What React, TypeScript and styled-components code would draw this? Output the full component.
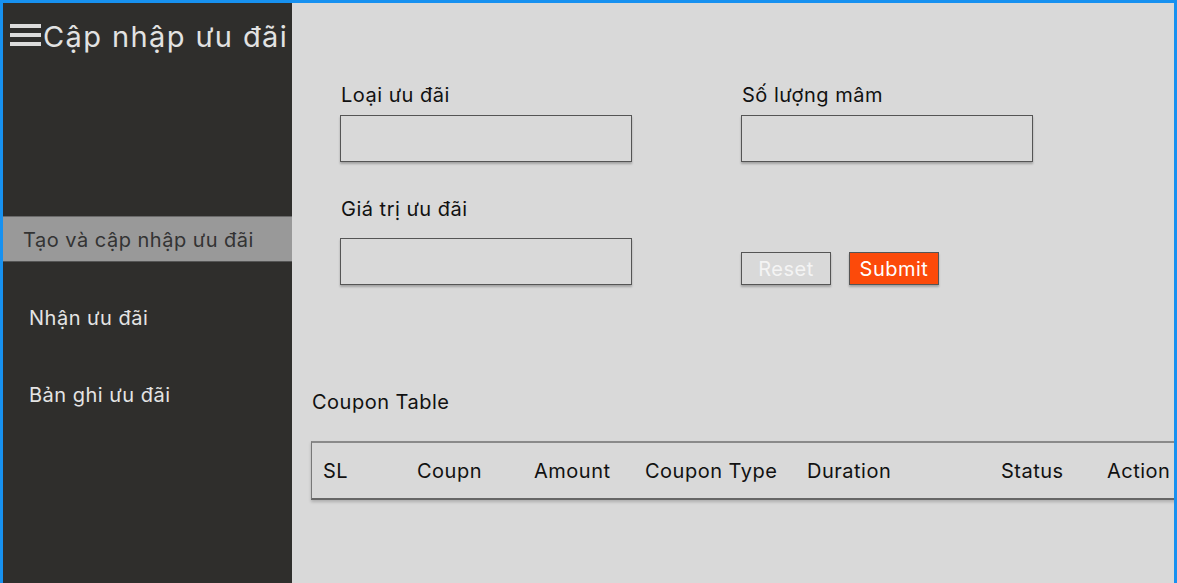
import React from 'react'
import styled, { createGlobalStyle } from 'styled-components'

const GlobalStyle = createGlobalStyle`
  html, body {
    margin: 0;
    padding: 0;
    height: 100%;
    overflow: hidden;
  }
  body {
    font-family: Inter, "Noto Sans", "Liberation Sans", sans-serif;
    letter-spacing: 0.5px;
  }
  #root {
    height: 100%;
  }
`

const navItems = [
  { label: 'Tạo và cập nhập ưu đãi', active: true },
  { label: 'Nhận ưu đãi', active: false },
  { label: 'Bản ghi ưu đãi', active: false },
]

const columns = ['SL', 'Coupn', 'Amount', 'Coupon Type', 'Duration', 'Status', 'Action']

const MenuIcon = () => (
  <svg width="31" height="24" viewBox="0 0 31 24" fill="#dcdcdc">
    <rect x="0" y="0" width="31" height="4" />
    <rect x="0" y="9" width="31" height="4" />
    <rect x="0" y="18" width="31" height="4" />
  </svg>
)

const App: React.FC = () => (
  <>
    <GlobalStyle />
    <Frame>
      <Sidebar>
        <Brand>
          <MenuIcon />
          <BrandTitle>Cập nhập ưu đãi</BrandTitle>
        </Brand>
        <Nav>
          {navItems.map((item) => (
            <NavItem key={item.label} $active={item.active}>
              {item.label}
            </NavItem>
          ))}
        </Nav>
      </Sidebar>

      <Main>
        <Form>
          <Field>
            <Label $gap={8}>Loại ưu đãi</Label>
            <Input />
          </Field>
          <Field>
            <Label $gap={8}>Số lượng mâm</Label>
            <Input />
          </Field>
          <Field>
            <Label $gap={17}>Giá trị ưu đãi</Label>
            <Input />
          </Field>
          <Actions>
            <Button type="button">Reset</Button>
            <Button type="button" $primary>
              Submit
            </Button>
          </Actions>
        </Form>

        <TableSection>
          <TableTitle>Coupon Table</TableTitle>
          <TableHead>
            {columns.map((c) => (
              <HeadCell key={c}>{c}</HeadCell>
            ))}
          </TableHead>
        </TableSection>
      </Main>
    </Frame>
  </>
)

const Frame = styled.div`
  box-sizing: border-box;
  height: 100%;
  display: grid;
  grid-template-columns: 289px 1fr;
  border: 3px solid #1791f0;
  border-bottom: none;
  background: #d9d9d9;
  overflow: hidden;
`

const Sidebar = styled.aside`
  background: #2f2e2c;
  display: flex;
  flex-direction: column;
`

const Brand = styled.div`
  display: flex;
  align-items: center;
  gap: 2px;
  padding: 8px 0 0 7px;
  height: 50px;

  svg {
    flex-shrink: 0;
  }
`

const BrandTitle = styled.h1`
  margin: 0;
  font-size: 29px;
  font-weight: 400;
  color: #e2e2e2;
  white-space: nowrap;
  letter-spacing: 1.4px;
`

const Nav = styled.nav`
  margin-top: 155px;
  display: flex;
  flex-direction: column;
  gap: 31px;
`

const NavItem = styled.div<{ $active?: boolean }>`
  box-sizing: border-box;
  height: 46px;
  display: flex;
  align-items: center;
  font-size: 20px;
  white-space: nowrap;
  padding-left: ${(p) => (p.$active ? '20px' : '26px')};
  padding-top: ${(p) => (p.$active ? '2px' : '4px')};
  color: ${(p) => (p.$active ? '#333' : '#e4e4e4')};
  background: ${(p) => (p.$active ? '#999' : 'transparent')};
  border-top: 1px solid ${(p) => (p.$active ? '#6a6a6a' : 'transparent')};
  border-bottom: 1px solid ${(p) => (p.$active ? '#555' : 'transparent')};
`

const Main = styled.main`
  display: flex;
  flex-direction: column;
  overflow: hidden;
  color: #111;
`

const Form = styled.div`
  display: grid;
  grid-template-columns: 292px 292px;
  column-gap: 109px;
  row-gap: 35px;
  padding: 80px 0 0 48px;
`

const Field = styled.div`
  display: flex;
  flex-direction: column;
`

const Label = styled.label<{ $gap: number }>`
  font-size: 20px;
  line-height: 24px;
  padding-left: 1px;
  margin-bottom: ${(p) => p.$gap}px;
`

const Input = styled.input`
  box-sizing: border-box;
  width: 292px;
  height: 47px;
  background: #d9d9d9;
  border: 1px solid #555;
  border-radius: 0;
  box-shadow: 0 2px 2px rgba(0, 0, 0, 0.25);
  outline: none;
`

const Actions = styled.div`
  align-self: end;
  display: flex;
  gap: 18px;
`

const Button = styled.button<{ $primary?: boolean }>`
  box-sizing: border-box;
  width: 90px;
  height: 33px;
  padding: 0;
  font-family: inherit;
  font-size: 20px;
  letter-spacing: 0.5px;
  border: 1px solid #555;
  border-radius: 0;
  box-shadow: 0 2px 2px rgba(0, 0, 0, 0.25);
  background: ${(p) => (p.$primary ? '#fc4a0a' : '#d9d9d9')};
  color: ${(p) => (p.$primary ? '#fff' : '#f4f4f4')};
`

const TableSection = styled.section`
  padding: 105px 0 0 19px;
`

const TableTitle = styled.h2`
  margin: 0 0 27px 1px;
  font-size: 20px;
  line-height: 24px;
  font-weight: 400;
`

const TableHead = styled.div`
  box-sizing: border-box;
  width: 920px;
  height: 59px;
  display: grid;
  grid-template-columns: 94px 117px 111px 162px 194px 106px 1fr;
  align-items: center;
  padding: 0 0 0 11px;
  border-top: 2px solid #8a8a8a;
  border-left: 1px solid #777;
  border-bottom: 2px solid #666;
  box-shadow: 0 2px 3px rgba(0, 0, 0, 0.2);
`

const HeadCell = styled.div`
  font-size: 20px;
  white-space: nowrap;
`

export default App
